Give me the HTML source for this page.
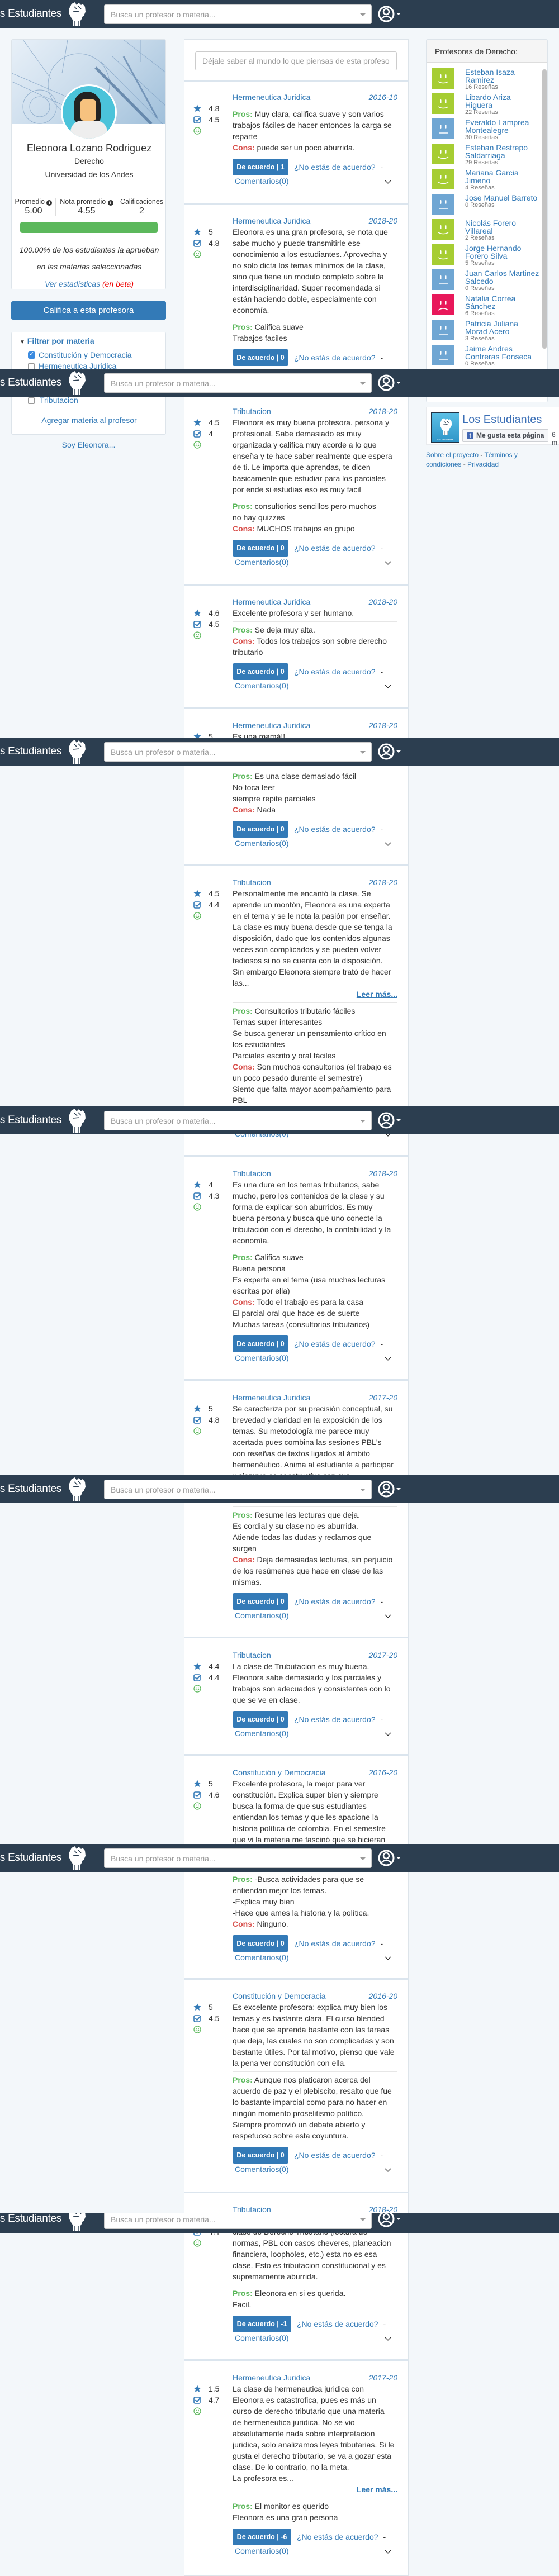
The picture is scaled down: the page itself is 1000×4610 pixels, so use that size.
<!DOCTYPE html>
<html><head><meta charset="utf-8">
<style>
*{box-sizing:border-box;margin:0;padding:0}
body{width:1000px;height:4605px;position:relative;overflow:hidden;background:#f3f7fa;font-family:"Liberation Sans",Arial,sans-serif;color:#333;font-size:14px}
.abs{position:absolute}
.hd{position:absolute;left:0;width:1000px;height:50px;background:#2c3e50;z-index:10;overflow:hidden}
.hdi{position:absolute;left:0;top:0;width:1000px;height:50px}
.logo{position:absolute;right:890px;top:14px;font-size:19px;color:#fff;white-space:nowrap;letter-spacing:-0.3px}
.fist{position:absolute;left:120px;top:3px}
.srch{position:absolute;left:186px;top:8px;width:479px;height:35px;background:#fff;border-radius:3px;border:1px solid #ccc}
.srch span{position:absolute;left:11px;top:9px;color:#999;font-size:14px}
.srch i{position:absolute;right:10px;top:15px;width:0;height:0;border-left:5px solid transparent;border-right:5px solid transparent;border-top:5px solid #999}
.usr{position:absolute;left:676px;top:9px}
.card{position:absolute;background:#fff;border:1px solid #dde4ea;border-radius:3px}
.c{text-align:center}
.sep{position:absolute;left:329px;width:402px;height:3px;background:#dbe5ee}
.rv{position:absolute;left:416px;width:295px;font-size:14px;line-height:20px;color:#333;white-space:nowrap}
.sub{display:flex;justify-content:space-between;height:20px;color:#337ab7}
.sub i{font-style:italic}
.hr{height:1px;background:#e6e6e6;margin:5px 0 4px}
.p{color:#5cb85c}
.k{color:#d9534f}
.act{margin-top:10px;height:30px;display:flex;align-items:center}
.btn{display:inline-block;width:100px;height:30px;line-height:30px;background:#337ab7;color:#fff;font-size:12.5px;font-weight:bold;text-align:center;border-radius:3px}
.act a{color:#337ab7;margin-left:10px}
.act .d{margin-left:9px}
.com{height:20px;line-height:20px;padding-left:4px;color:#337ab7;position:relative}
.chev{position:absolute;left:272px;top:8px}
.lm{text-align:right;font-weight:bold;color:#337ab7;text-decoration:underline}
.sc{position:absolute;left:-70px;top:20px;line-height:20px}
.sc div{height:20px;display:flex;align-items:center}
.sc span{margin-left:13px}
.it{position:absolute;left:773px;width:200px;height:45px}
.av{position:absolute;left:0;top:0;width:40px;height:37px}
.nm{position:absolute;left:59px;top:0;color:#337ab7;font-size:14px;line-height:14px;width:150px}
.nm small{display:block;color:#777;font-size:11px;line-height:13px}
a{color:#337ab7;text-decoration:none}
</style></head><body>

<svg width="0" height="0" style="position:absolute">
<defs>
<symbol id="fist" viewBox="0 0 34 44"><path d="M8 4 L14 1 L17 6 L21 2 L25 6 L28 4 L32 9 L33 18 L30 25 L26 28 L26 31 L24 34 L24 44 L11 44 L11 34 L7 28 L3 20 L4 12 Z" fill="#fff"/><path d="M13 9 L18 14 M20 8 L25 13 M11 18 L22 17 M14 34 L14 44 M21 34 L21 44" stroke="#2c3e50" stroke-width="1.5" fill="none"/></symbol>
<symbol id="usr" viewBox="0 0 44 32"><circle cx="15" cy="16" r="13" fill="none" stroke="#fff" stroke-width="3"/><circle cx="15" cy="12" r="5" fill="none" stroke="#fff" stroke-width="2.5"/><path d="M6 25 Q15 15 24 25" fill="none" stroke="#fff" stroke-width="2.5"/><path d="M33 14 L41 14 L37 18 Z" fill="#fff"/></symbol>
<symbol id="star" viewBox="0 0 14 14"><path d="M7 0.5 L8.9 4.8 L13.5 5.2 L10 8.3 L11.1 12.9 L7 10.5 L2.9 12.9 L4 8.3 L0.5 5.2 L5.1 4.8 Z" fill="#337ab7"/></symbol>
<symbol id="chk" viewBox="0 0 14 14"><rect x="1" y="2" width="11" height="11" rx="2" fill="none" stroke="#337ab7" stroke-width="1.6"/><path d="M3.5 7 L6.5 10 L13 2.5" fill="none" stroke="#337ab7" stroke-width="2"/></symbol>
<symbol id="smi" viewBox="0 0 14 14"><circle cx="7" cy="7" r="6" fill="none" stroke="#5cb85c" stroke-width="1.3"/><circle cx="5" cy="5.5" r="0.9" fill="#5cb85c"/><circle cx="9" cy="5.5" r="0.9" fill="#5cb85c"/><path d="M4 8.2 Q7 11 10 8.2" fill="none" stroke="#5cb85c" stroke-width="1.2"/></symbol>
<symbol id="chev" viewBox="0 0 12 7"><path d="M1 1 L6 6 L11 1" fill="none" stroke="#333" stroke-width="1.3"/></symbol>
<symbol id="hap" viewBox="0 0 40 37"><rect width="40" height="37"/><rect x="14" y="11" width="2.5" height="7" rx="1.2" fill="#fff"/><rect x="23" y="11" width="2.5" height="7" rx="1.2" fill="#fff"/><path d="M11 24 Q20 29 29 24" fill="none" stroke="#fff" stroke-width="1.5"/></symbol>
<symbol id="neu" viewBox="0 0 40 37"><rect x="14" y="11" width="2.5" height="7" rx="1.2" fill="#fff"/><rect x="23" y="11" width="2.5" height="7" rx="1.2" fill="#fff"/><path d="M12 26 L28 26" fill="none" stroke="#fff" stroke-width="1.5"/></symbol>
<symbol id="sad" viewBox="0 0 40 37"><rect x="14" y="11" width="2.5" height="7" rx="1.2" fill="#fff"/><rect x="23" y="11" width="2.5" height="7" rx="1.2" fill="#fff"/><path d="M11 28 Q20 22 29 28" fill="none" stroke="#fff" stroke-width="1.5"/></symbol>
</defs></svg>

<div class="hd" style="top:0"><div class="hdi"><div class="logo">Los Estudiantes</div><svg class="fist" width="34" height="44"><use href="#fist"/></svg><div class="srch"><span>Busca un profesor o materia...</span><i></i></div><svg class="usr" width="44" height="32"><use href="#usr"/></svg></div></div>
<div class="hd" style="top:660px"><div class="hdi"><div class="logo">Los Estudiantes</div><svg class="fist" width="34" height="44"><use href="#fist"/></svg><div class="srch"><span>Busca un profesor o materia...</span><i></i></div><svg class="usr" width="44" height="32"><use href="#usr"/></svg></div></div>
<div class="hd" style="top:1320px"><div class="hdi"><div class="logo">Los Estudiantes</div><svg class="fist" width="34" height="44"><use href="#fist"/></svg><div class="srch"><span>Busca un profesor o materia...</span><i></i></div><svg class="usr" width="44" height="32"><use href="#usr"/></svg></div></div>
<div class="hd" style="top:1980px"><div class="hdi"><div class="logo">Los Estudiantes</div><svg class="fist" width="34" height="44"><use href="#fist"/></svg><div class="srch"><span>Busca un profesor o materia...</span><i></i></div><svg class="usr" width="44" height="32"><use href="#usr"/></svg></div></div>
<div class="hd" style="top:2640px"><div class="hdi"><div class="logo">Los Estudiantes</div><svg class="fist" width="34" height="44"><use href="#fist"/></svg><div class="srch"><span>Busca un profesor o materia...</span><i></i></div><svg class="usr" width="44" height="32"><use href="#usr"/></svg></div></div>
<div class="hd" style="top:3300px"><div class="hdi"><div class="logo">Los Estudiantes</div><svg class="fist" width="34" height="44"><use href="#fist"/></svg><div class="srch"><span>Busca un profesor o materia...</span><i></i></div><svg class="usr" width="44" height="32"><use href="#usr"/></svg></div></div>
<div class="hd" style="top:3960px;height:36px"><div class="hdi" style="top:-14px"><div class="logo">Los Estudiantes</div><svg class="fist" width="34" height="44"><use href="#fist"/></svg><div class="srch"><span>Busca un profesor o materia...</span><i></i></div><svg class="usr" width="44" height="32"><use href="#usr"/></svg></div></div>

<!-- LEFT COLUMN -->
<div class="card" style="left:20px;top:70px;width:277px;height:448px;overflow:hidden">
  <div style="position:absolute;left:0;top:0;width:277px;height:151px;background:linear-gradient(135deg,#e8f0f8 0%,#c9dbeb 50%,#9fbfda 100%)">
    <svg width="277" height="151" style="position:absolute;left:0;top:0">
      <g stroke="#7a9cc0" stroke-width="1" fill="none" opacity="0.7">
        <circle cx="50" cy="120" r="30"/><circle cx="50" cy="120" r="18"/><circle cx="120" cy="80" r="55"/>
        <path d="M0 60 L140 120 M0 75 L130 135 M160 40 L270 151 M180 30 L277 120 M200 0 L277 60"/>
        <path d="M150 50 L250 151" stroke="#4a6f98" stroke-width="5"/>
        <path d="M200 30 L260 140" stroke="#5b7fa8" stroke-width="3"/>
        <path d="M20 0 L70 70 M100 0 L90 60 M230 0 L230 40"/>
      </g>
    </svg>
  </div>
  <div style="position:absolute;left:88px;top:80px;width:100px;height:100px;border-radius:50%;background:#fff"></div>
  <div style="position:absolute;left:91px;top:83px;width:94px;height:94px;border-radius:50%;background:#4bc3da;overflow:hidden">
    <div style="position:absolute;left:20px;top:10px;width:48px;height:56px;border-radius:24px 24px 10px 10px;background:#222"></div>
    <div style="position:absolute;left:32px;top:24px;width:28px;height:38px;border-radius:6px;background:#f6c27f"></div>
    <div style="position:absolute;left:14px;top:62px;width:66px;height:40px;border-radius:20px 20px 0 0;background:#eeeeee"></div>
  </div>
  <div class="abs c" style="left:0;top:184px;width:277px;font-size:18px">Eleonora Lozano Rodriguez</div>
  <div class="abs c" style="left:0;top:209px;width:277px">Derecho</div>
  <div class="abs c" style="left:0;top:233px;width:277px">Universidad de los Andes</div>
  <div class="abs c" style="left:0;top:283px;width:78px;font-size:12.5px">Promedio <b style="display:inline-block;width:10px;height:10px;border-radius:50%;background:#333;color:#fff;font-size:8px;line-height:10px">i</b></div>
  <div class="abs c" style="left:0;top:298px;width:78px;font-size:16px">5.00</div>
  <div class="abs" style="left:78px;top:283px;width:1px;height:32px;background:#ddd"></div>
  <div class="abs c" style="left:79px;top:283px;width:110px;font-size:12.5px">Nota promedio <b style="display:inline-block;width:10px;height:10px;border-radius:50%;background:#333;color:#fff;font-size:8px;line-height:10px">i</b></div>
  <div class="abs c" style="left:79px;top:298px;width:110px;font-size:16px">4.55</div>
  <div class="abs" style="left:188px;top:283px;width:1px;height:32px;background:#ddd"></div>
  <div class="abs c" style="left:189px;top:283px;width:87px;font-size:12.5px">Calificaciones</div>
  <div class="abs c" style="left:189px;top:298px;width:87px;font-size:16px">2</div>
  <div class="abs" style="left:15px;top:326px;width:246px;height:20px;border-radius:4px;background:#5cb85c"></div>
  <div class="abs c" style="left:0;top:368px;width:277px;font-style:italic;font-size:14px">100.00% de los estudiantes la aprueban</div>
  <div class="abs c" style="left:0;top:398px;width:277px;font-style:italic;font-size:14px">en las materias seleccionadas</div>
  <div class="abs" style="left:0;top:421px;width:277px;height:1px;background:#e5e5e5"></div>
  <div class="abs c" style="left:0;top:429px;width:277px;font-style:italic;font-size:14px;color:#337ab7">Ver estadísticas <span style="color:#e00">(en beta)</span></div>
</div>
<div class="abs c" style="left:20px;top:539px;width:277px;height:33px;line-height:33px;background:#337ab7;color:#fff;border-radius:3px;font-size:15px">Califica a esta profesora</div>
<div class="card" style="left:20px;top:594px;width:277px;height:184px">
  <div class="abs" style="left:14px;top:7px;color:#337ab7;font-weight:bold;font-size:14px"><span style="color:#333;font-size:10px">▼</span> Filtrar por materia</div>
  <div class="abs" style="left:29px;top:34px;width:13px;height:13px;border-radius:3px;background:#3b8be0"></div>
  <div class="abs" style="left:31px;top:32px;color:#fff;font-size:11px">✓</div>
  <div class="abs" style="left:48px;top:32px;color:#337ab7">Constitución y Democracia</div>
  <div class="abs" style="left:29px;top:55px;width:12px;height:12px;border:1px solid #999;border-radius:2px"></div>
  <div class="abs" style="left:48px;top:52px;color:#337ab7">Hermeneutica Juridica</div>
  <div class="abs" style="left:29px;top:116px;width:12px;height:12px;border:1px solid #999;border-radius:2px"></div>
  <div class="abs" style="left:50px;top:113px;color:#337ab7">Tributacion</div>
  <div class="abs" style="left:28px;top:135px;width:219px;height:1px;background:#e5e5e5"></div>
  <div class="abs c" style="left:0;top:149px;width:277px;color:#337ab7">Agregar materia al profesor</div>
</div>
<div class="abs c" style="left:20px;top:788px;width:277px;color:#337ab7">Soy Eleonora...</div>

<!-- RIGHT COLUMN -->
<div class="card" style="left:762px;top:70px;width:218px;height:650px;overflow:hidden">
  <div class="abs" style="left:0;top:0;width:218px;height:41px;background:#f5f5f5;border-bottom:1px solid #ddd"></div>
  <div class="abs" style="left:15px;top:13px;font-size:14px">Profesores de Derecho:</div>
  <div class="abs" style="left:207px;top:53px;width:8px;height:500px;border-radius:4px;background:#c4c4c4"></div>
</div>
<div class="it" style="top:122px"><svg class="av" style="fill:#a6cd32"><use href="#hap"/></svg><div class="nm">Esteban Isaza<br>Ramirez<small>16 Reseñas</small></div></div>
<div class="it" style="top:167px"><svg class="av" style="fill:#a6cd32"><use href="#hap"/></svg><div class="nm">Libardo Ariza<br>Higuera<small>22 Reseñas</small></div></div>
<div class="it" style="top:212px"><div class="av" style="background:#6fa6d3"></div><svg class="av"><use href="#neu"/></svg><div class="nm">Everaldo Lamprea<br>Montealegre<small>30 Reseñas</small></div></div>
<div class="it" style="top:257px"><svg class="av" style="fill:#a6cd32"><use href="#hap"/></svg><div class="nm">Esteban Restrepo<br>Saldarriaga<small>29 Reseñas</small></div></div>
<div class="it" style="top:302px"><svg class="av" style="fill:#a6cd32"><use href="#hap"/></svg><div class="nm">Mariana Garcia<br>Jimeno<small>4 Reseñas</small></div></div>
<div class="it" style="top:347px"><div class="av" style="background:#6fa6d3"></div><svg class="av"><use href="#neu"/></svg><div class="nm" style="width:160px">Jose Manuel Barreto<small>0 Reseñas</small></div></div>
<div class="it" style="top:392px"><svg class="av" style="fill:#a6cd32"><use href="#hap"/></svg><div class="nm">Nicolás Forero<br>Villareal<small>2 Reseñas</small></div></div>
<div class="it" style="top:437px"><svg class="av" style="fill:#a6cd32"><use href="#hap"/></svg><div class="nm">Jorge Hernando<br>Forero Silva<small>5 Reseñas</small></div></div>
<div class="it" style="top:482px"><div class="av" style="background:#6fa6d3"></div><svg class="av"><use href="#neu"/></svg><div class="nm" style="width:160px">Juan Carlos Martinez<br>Salcedo<small>0 Reseñas</small></div></div>
<div class="it" style="top:527px"><div class="av" style="background:#e8185a"></div><svg class="av"><use href="#sad"/></svg><div class="nm">Natalia Correa<br>Sánchez<small>6 Reseñas</small></div></div>
<div class="it" style="top:572px"><div class="av" style="background:#6fa6d3"></div><svg class="av"><use href="#neu"/></svg><div class="nm">Patricia Juliana<br>Morad Acero<small>3 Reseñas</small></div></div>
<div class="it" style="top:617px"><div class="av" style="background:#6fa6d3"></div><svg class="av"><use href="#neu"/></svg><div class="nm">Jaime Andres<br>Contreras Fonseca<small>0 Reseñas</small></div></div>

<div class="abs" style="left:762px;top:728px;width:240px;height:68px;border:1px solid #e9ebee;background:#fff"></div>
<div class="abs" style="left:771px;top:738px;width:51px;height:54px;background:linear-gradient(#5bc0e6,#2f95c8);border:1px solid #234">
  <svg width="24" height="32" viewBox="0 0 34 44" style="position:absolute;left:13px;top:8px"><use href="#fist"/></svg>
  <div style="position:absolute;left:0;bottom:2px;width:49px;text-align:center;color:#fff;font-size:4px">Los Estudiantes</div>
</div>
<div class="abs" style="left:827px;top:740px;font-size:20px;color:#3b6fb6">Los Estudiantes</div>
<div class="abs" style="left:827px;top:768px;width:154px;height:23px;background:#f6f7f9;border:1px solid #ced0d4;border-radius:2px;font-size:12px;font-weight:bold;color:#4b4f56;line-height:21px;padding-left:24px">Me gusta esta página
  <div style="position:absolute;left:7px;top:5px;width:12px;height:12px;background:#4267b2;border-radius:2px;color:#fff;font-size:10px;line-height:13px;text-align:center">f</div></div>
<div class="abs" style="left:987px;top:771px;font-size:12px;color:#4b4f56">6 m</div>
<div class="abs" style="left:762px;top:806px;font-size:12px;line-height:17px;color:#337ab7;white-space:nowrap">Sobre el proyecto <span style="color:#333">-</span> Términos y<br>condiciones <span style="color:#333">-</span> Privacidad</div>

<!-- MIDDLE COLUMN -->
<div class="abs" style="left:329px;top:70px;width:402px;height:4540px;background:#fff;border:1px solid #dde4ea"></div>
<div class="abs" style="left:349px;top:92px;width:361px;height:34px;border:1px solid #ccc;border-radius:3px;color:#999;font-size:14px;line-height:32px;padding-left:12px;white-space:nowrap;overflow:hidden">Déjale saber al mundo lo que piensas de esta profeso</div>

<div class="sep" style="top:143px"></div>
<div class="sep" style="top:363px"></div>
<div class="sep" style="top:704px"></div>
<div class="sep" style="top:1045px"></div>
<div class="sep" style="top:1266px"></div>
<div class="sep" style="top:1546px"></div>
<div class="sep" style="top:2067px"></div>
<div class="sep" style="top:2468px"></div>
<div class="sep" style="top:2929px"></div>
<div class="sep" style="top:3139px"></div>
<div class="sep" style="top:3540px"></div>
<div class="sep" style="top:3922px"></div>
<div class="sep" style="top:4222px"></div>

<div class="rv" style="top:164px">
<div class="sc"><div><svg width="14" height="14"><use href="#star"/></svg><span>4.8</span></div><div><svg width="14" height="14"><use href="#chk"/></svg><span>4.5</span></div><div><svg width="14" height="14"><use href="#smi"/></svg></div></div>
<div class="sub"><span>Hermeneutica Juridica</span><i>2016-10</i></div>
<div class="hr"></div>
<div><b class="p">Pros:</b> Muy clara, califica suave y son varios<br>trabajos fáciles de hacer entonces la carga se<br>reparte<br><b class="k">Cons:</b> puede ser un poco aburrida.</div>
<div class="act"><span class="btn">De acuerdo | 1</span><a>¿No estás de acuerdo?</a><span class="d">-</span></div>
<div class="com">Comentarios(0)<svg class="chev" width="12" height="7"><use href="#chev"/></svg></div>
</div>

<div class="rv" style="top:385px">
<div class="sc"><div><svg width="14" height="14"><use href="#star"/></svg><span>5</span></div><div><svg width="14" height="14"><use href="#chk"/></svg><span>4.8</span></div><div><svg width="14" height="14"><use href="#smi"/></svg></div></div>
<div class="sub"><span>Hermeneutica Juridica</span><i>2018-20</i></div>
<div>Eleonora es una gran profesora, se nota que<br>sabe mucho y puede transmitirle ese<br>conocimiento a los estudiantes. Aprovecha y<br>no solo dicta los temas mínimos de la clase,<br>sino que tiene un modulo completo sobre la<br>interdisciplinaridad. Super recomendada si<br>están haciendo doble, especialmente con<br>economía.</div>
<div class="hr"></div>
<div><b class="p">Pros:</b> Califica suave<br>Trabajos faciles</div>
<div class="act"><span class="btn">De acuerdo | 0</span><a>¿No estás de acuerdo?</a><span class="d">-</span></div>
</div>

<div class="rv" style="top:726px">
<div class="sc"><div><svg width="14" height="14"><use href="#star"/></svg><span>4.5</span></div><div><svg width="14" height="14"><use href="#chk"/></svg><span>4</span></div><div><svg width="14" height="14"><use href="#smi"/></svg></div></div>
<div class="sub"><span>Tributacion</span><i>2018-20</i></div>
<div>Eleonora es muy buena profesora. persona y<br>profesional. Sabe demasiado es muy<br>organizada y califica muy acorde a lo que<br>enseña y te hace saber realmente que espera<br>de ti. Le importa que aprendas, te dicen<br>basicamente que estudiar para los parciales<br>por ende si estudias eso es muy facil</div>
<div class="hr"></div>
<div><b class="p">Pros:</b> consultorios sencillos pero muchos<br>no hay quizzes<br><b class="k">Cons:</b> MUCHOS trabajos en grupo</div>
<div class="act"><span class="btn">De acuerdo | 0</span><a>¿No estás de acuerdo?</a><span class="d">-</span></div>
<div class="com">Comentarios(0)<svg class="chev" width="12" height="7"><use href="#chev"/></svg></div>
</div>

<div class="rv" style="top:1067px">
<div class="sc"><div><svg width="14" height="14"><use href="#star"/></svg><span>4.6</span></div><div><svg width="14" height="14"><use href="#chk"/></svg><span>4.5</span></div><div><svg width="14" height="14"><use href="#smi"/></svg></div></div>
<div class="sub"><span>Hermeneutica Juridica</span><i>2018-20</i></div>
<div>Excelente profesora y ser humano.</div>
<div class="hr"></div>
<div><b class="p">Pros:</b> Se deja muy alta.<br><b class="k">Cons:</b> Todos los trabajos son sobre derecho<br>tributario</div>
<div class="act"><span class="btn">De acuerdo | 0</span><a>¿No estás de acuerdo?</a><span class="d">-</span></div>
<div class="com">Comentarios(0)<svg class="chev" width="12" height="7"><use href="#chev"/></svg></div>
</div>

<div class="rv" style="top:1288px">
<div class="sc"><div><svg width="14" height="14"><use href="#star"/></svg><span>5</span></div></div>
<div class="sub"><span>Hermeneutica Juridica</span><i>2018-20</i></div>
<div>Es una mamá!!</div>
</div>
<div class="rv" style="top:1369px">
<div class="hr"></div>
<div><b class="p">Pros:</b> Es una clase demasiado fácil<br>No toca leer<br>siempre repite parciales<br><b class="k">Cons:</b> Nada</div>
<div class="act"><span class="btn">De acuerdo | 0</span><a>¿No estás de acuerdo?</a><span class="d">-</span></div>
<div class="com">Comentarios(0)<svg class="chev" width="12" height="7"><use href="#chev"/></svg></div>
</div>

<div class="rv" style="top:1569px">
<div class="sc"><div><svg width="14" height="14"><use href="#star"/></svg><span>4.5</span></div><div><svg width="14" height="14"><use href="#chk"/></svg><span>4.4</span></div><div><svg width="14" height="14"><use href="#smi"/></svg></div></div>
<div class="sub"><span>Tributacion</span><i>2018-20</i></div>
<div>Personalmente me encantó la clase. Se<br>aprende un montón, Eleonora es una experta<br>en el tema y se le nota la pasión por enseñar.<br>La clase es muy buena desde que se tenga la<br>disposición, dado que los contenidos algunas<br>veces son complicados y se pueden volver<br>tediosos si no se cuenta con la disposición.<br>Sin embargo Eleonora siempre trató de hacer<br>las...</div>
<div class="lm">Leer más...</div>
<div class="hr"></div>
<div><b class="p">Pros:</b> Consultorios tributario fáciles<br>Temas super interesantes<br>Se busca generar un pensamiento crítico en<br>los estudiantes<br>Parciales escrito y oral fáciles<br><b class="k">Cons:</b> Son muchos consultorios (el trabajo es<br>un poco pesado durante el semestre)<br>Siento que falta mayor acompañamiento para<br>PBL</div>
<div class="act"><span class="btn">De acuerdo | 0</span><a>¿No estás de acuerdo?</a><span class="d">-</span></div>
<div class="com">Comentarios(0)<svg class="chev" width="12" height="7"><use href="#chev"/></svg></div>
</div>

<div class="rv" style="top:2090px">
<div class="sc"><div><svg width="14" height="14"><use href="#star"/></svg><span>4</span></div><div><svg width="14" height="14"><use href="#chk"/></svg><span>4.3</span></div><div><svg width="14" height="14"><use href="#smi"/></svg></div></div>
<div class="sub"><span>Tributacion</span><i>2018-20</i></div>
<div>Es una dura en los temas tributarios, sabe<br>mucho, pero los contenidos de la clase y su<br>forma de explicar son aburridos. Es muy<br>buena persona y busca que uno conecte la<br>tributación con el derecho, la contabilidad y la<br>economía.</div>
<div class="hr"></div>
<div><b class="p">Pros:</b> Califica suave<br>Buena persona<br>Es experta en el tema (usa muchas lecturas<br>escritas por ella)<br><b class="k">Cons:</b> Todo el trabajo es para la casa<br>El parcial oral que hace es de suerte<br>Muchas tareas (consultorios tributarios)</div>
<div class="act"><span class="btn">De acuerdo | 0</span><a>¿No estás de acuerdo?</a><span class="d">-</span></div>
<div class="com">Comentarios(0)<svg class="chev" width="12" height="7"><use href="#chev"/></svg></div>
</div>

<div class="rv" style="top:2491px">
<div class="sc"><div><svg width="14" height="14"><use href="#star"/></svg><span>5</span></div><div><svg width="14" height="14"><use href="#chk"/></svg><span>4.8</span></div><div><svg width="14" height="14"><use href="#smi"/></svg></div></div>
<div class="sub"><span>Hermeneutica Juridica</span><i>2017-20</i></div>
<div>Se caracteriza por su precisión conceptual, su<br>brevedad y claridad en la exposición de los<br>temas. Su metodología me parece muy<br>acertada pues combina las sesiones PBL's<br>con reseñas de textos ligados al ámbito<br>hermenéutico. Anima al estudiante a participar<br>y siempre es constructivo con sus...</div>
</div>
<div class="rv" style="top:2691px">
<div class="hr"></div>
<div><b class="p">Pros:</b> Resume las lecturas que deja.<br>Es cordial y su clase no es aburrida.<br>Atiende todas las dudas y reclamos que<br>surgen<br><b class="k">Cons:</b> Deja demasiadas lecturas, sin perjuicio<br>de los resúmenes que hace en clase de las<br>mismas.</div>
<div class="act"><span class="btn">De acuerdo | 0</span><a>¿No estás de acuerdo?</a><span class="d">-</span></div>
<div class="com">Comentarios(0)<svg class="chev" width="12" height="7"><use href="#chev"/></svg></div>
</div>

<div class="rv" style="top:2952px">
<div class="sc"><div><svg width="14" height="14"><use href="#star"/></svg><span>4.4</span></div><div><svg width="14" height="14"><use href="#chk"/></svg><span>4.4</span></div><div><svg width="14" height="14"><use href="#smi"/></svg></div></div>
<div class="sub"><span>Tributacion</span><i>2017-20</i></div>
<div>La clase de Trubutacion es muy buena.<br>Eleonora sabe demasiado y los parciales y<br>trabajos son adecuados y consistentes con lo<br>que se ve en clase.</div>
<div class="act"><span class="btn">De acuerdo | 0</span><a>¿No estás de acuerdo?</a><span class="d">-</span></div>
<div class="com">Comentarios(0)<svg class="chev" width="12" height="7"><use href="#chev"/></svg></div>
</div>

<div class="rv" style="top:3162px">
<div class="sc"><div><svg width="14" height="14"><use href="#star"/></svg><span>5</span></div><div><svg width="14" height="14"><use href="#chk"/></svg><span>4.6</span></div><div><svg width="14" height="14"><use href="#smi"/></svg></div></div>
<div class="sub"><span>Constitución y Democracia</span><i>2016-20</i></div>
<div>Excelente profesora, la mejor para ver<br>constitución. Explica super bien y siempre<br>busca la forma de que sus estudiantes<br>entiendan los temas y que les apacione la<br>historia política de colombia. En el semestre<br>que vi la materia me fascinó que se hicieran</div>
</div>
<div class="rv" style="top:3353px">
<div><b class="p">Pros:</b> -Busca actividades para que se<br>entiendan mejor los temas.<br>-Explica muy bien<br>-Hace que ames la historia y la política.<br><b class="k">Cons:</b> Ninguno.</div>
<div class="act"><span class="btn">De acuerdo | 0</span><a>¿No estás de acuerdo?</a><span class="d">-</span></div>
<div class="com">Comentarios(0)<svg class="chev" width="12" height="7"><use href="#chev"/></svg></div>
</div>

<div class="rv" style="top:3562px">
<div class="sc"><div><svg width="14" height="14"><use href="#star"/></svg><span>5</span></div><div><svg width="14" height="14"><use href="#chk"/></svg><span>4.5</span></div><div><svg width="14" height="14"><use href="#smi"/></svg></div></div>
<div class="sub"><span>Constitución y Democracia</span><i>2016-20</i></div>
<div>Es excelente profesora: explica muy bien los<br>temas y es bastante clara. El curso blended<br>hace que se aprenda bastante con las tareas<br>que deja, las cuales no son complicadas y son<br>bastante útiles. Por tal motivo, pienso que vale<br>la pena ver constitución con ella.</div>
<div class="hr"></div>
<div><b class="p">Pros:</b> Aunque nos platicaron acerca del<br>acuerdo de paz y el plebiscito, resalto que fue<br>lo bastante imparcial como para no hacer en<br>ningún momento proselitismo político.<br>Siempre promovió un debate abierto y<br>respetuoso sobre esta coyuntura.</div>
<div class="act"><span class="btn">De acuerdo | 0</span><a>¿No estás de acuerdo?</a><span class="d">-</span></div>
<div class="com">Comentarios(0)<svg class="chev" width="12" height="7"><use href="#chev"/></svg></div>
</div>

<div class="rv" style="top:3944px">
<div class="sc"><div><svg width="14" height="14"><use href="#star"/></svg><span>3</span></div><div><svg width="14" height="14"><use href="#chk"/></svg><span>4.4</span></div><div><svg width="14" height="14"><use href="#smi"/></svg></div></div>
<div class="sub"><span>Tributacion</span><i>2018-20</i></div>
<div>Si uno espera una clase interesante, como una<br>clase de Derecho Tributario (lectura de<br>normas, PBL con casos cheveres, planeacion<br>financiera, loopholes, etc.) esta no es esa<br>clase. Esto es tributacion constitucional y es<br>supremamente aburrida.</div>
<div class="hr"></div>
<div><b class="p">Pros:</b> Eleonora en si es querida.<br>Facil.</div>
<div class="act"><span class="btn" style="width:105px">De acuerdo | -1</span><a>¿No estás de acuerdo?</a><span class="d">-</span></div>
<div class="com">Comentarios(0)<svg class="chev" width="12" height="7"><use href="#chev"/></svg></div>
</div>

<div class="rv" style="top:4245px">
<div class="sc"><div><svg width="14" height="14"><use href="#star"/></svg><span>1.5</span></div><div><svg width="14" height="14"><use href="#chk"/></svg><span>4.7</span></div><div><svg width="14" height="14"><use href="#smi"/></svg></div></div>
<div class="sub"><span>Hermeneutica Juridica</span><i>2017-20</i></div>
<div>La clase de hermeneutica juridica con<br>Eleonora es catastrofica, pues es más un<br>curso de derecho tributario que una materia<br>de hermeneutica juridica. No se vio<br>absolutamente nada sobre interpretacion<br>juridica, solo analizamos leyes tributarias. Si le<br>gusta el derecho tributario, se va a gozar esta<br>clase. De lo contrario, no la meta.<br>La profesora es...</div>
<div class="lm">Leer más...</div>
<div class="hr"></div>
<div><b class="p">Pros:</b> El monitor es querido<br>Eleonora es una gran persona</div>
<div class="act"><span class="btn" style="width:105px">De acuerdo | -6</span><a>¿No estás de acuerdo?</a><span class="d">-</span></div>
<div class="com">Comentarios(0)<svg class="chev" width="12" height="7"><use href="#chev"/></svg></div>
</div>

</body></html>
